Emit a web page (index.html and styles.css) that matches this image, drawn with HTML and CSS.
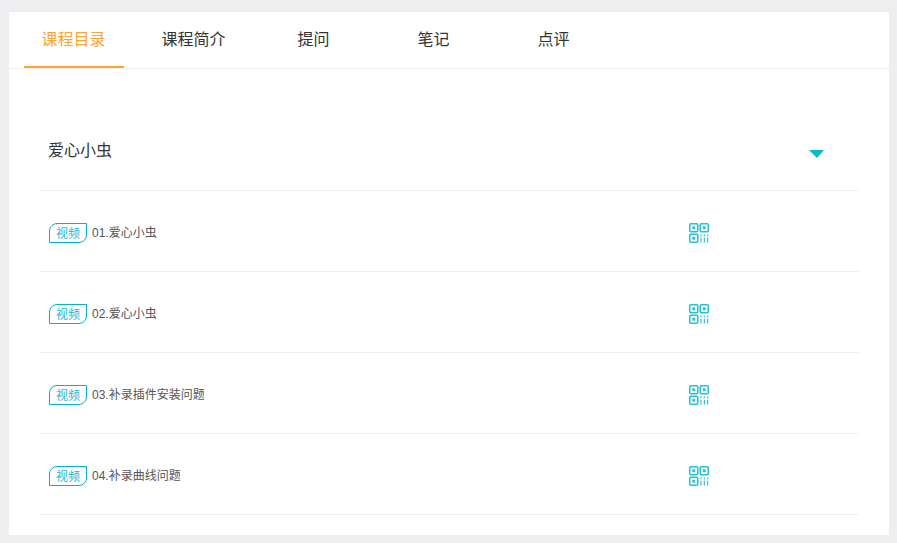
FILE: index.html
```html
<!DOCTYPE html>
<html lang="en">
  <head>
    <title>课程目录</title>
    <meta charset="UTF-8">
    <link rel="stylesheet" href="styles.css">
  </head>
  <body>
    <svg class="defs" width="0" height="0">
      <symbol id="qr" viewBox="0 0 21 21">
        <g fill="none" stroke="#22c3d6" stroke-width="1.6">
          <rect x="0.8" y="0.8" width="8.4" height="8.4" rx="1"/>
          <rect x="11.8" y="0.8" width="8.4" height="8.4" rx="1"/>
          <rect x="0.8" y="11.8" width="8.4" height="8.4" rx="1"/>
        </g>
        <g fill="#22c3d6">
          <rect x="3.5" y="3.5" width="3" height="3"/>
          <rect x="14.5" y="3.5" width="3" height="3"/>
          <rect x="3.5" y="14.5" width="3" height="3"/>
          <rect x="12" y="12" width="1.2" height="2"/>
          <rect x="12" y="15.5" width="1.2" height="5"/>
          <rect x="15.5" y="12" width="1.2" height="2"/>
          <rect x="15.5" y="15.5" width="1.2" height="5"/>
          <rect x="19" y="12" width="1.2" height="2"/>
          <rect x="19" y="15.5" width="1.2" height="5"/>
        </g>
      </symbol>
    </svg>
    <div class="panel">
      <div class="tabs">
        <a class="tab active">课程目录</a>
        <a class="tab">课程简介</a>
        <a class="tab">提问</a>
        <a class="tab">笔记</a>
        <a class="tab">点评</a>
      </div>
      <div class="content">
        <div class="chapter">
          <span class="chapter-name">爱心小虫</span>
          <span class="arrow"></span>
        </div>
        <div class="lesson">
          <span class="tag">视频</span>
          <span class="lesson-name">01.爱心小虫</span>
          <svg class="qr"><use href="#qr"/></svg>
        </div>
        <div class="lesson">
          <span class="tag">视频</span>
          <span class="lesson-name">02.爱心小虫</span>
          <svg class="qr"><use href="#qr"/></svg>
        </div>
        <div class="lesson">
          <span class="tag">视频</span>
          <span class="lesson-name">03.补录插件安装问题</span>
          <svg class="qr"><use href="#qr"/></svg>
        </div>
        <div class="lesson">
          <span class="tag">视频</span>
          <span class="lesson-name">04.补录曲线问题</span>
          <svg class="qr"><use href="#qr"/></svg>
        </div>
      </div>
    </div>
  </body>
</html>
```

FILE: styles.css
```css
*{
    margin: 0;
    padding: 0;
    box-sizing: border-box;
}
html,body{width: 100%;height: 100%;overflow: hidden;}
body{
    background: #eeeef0;
    padding: 12px 8px 8px 9px;
    font-family: "Liberation Sans", "Noto Sans CJK SC", sans-serif;
    color: #333;
}
.defs{
    display: block;
    height: 0;
}
.panel{
    height: 523px;
    background: #fff;
}
.tabs{
    height: 57px;
    padding-left: 15px;
    display: flex;
    gap: 20px;
    border-bottom: 1px solid #eaeeee;
}
.tab{
    width: 100px;
    height: 56px;
    padding-right: 1px;
    line-height: 56px;
    text-align: center;
    font-size: 16px;
}
.tab.active{
    color: #ffa42e;
    border-bottom: 2px solid #ffa42e;
}
.content{
    padding: 0 30px;
}
.chapter{
    height: 122px;
    padding: 70px 35px 0 9px;
    display: flex;
    justify-content: space-between;
    align-items: flex-start;
    border-bottom: 1px solid #efefef;
}
.chapter-name{
    font-size: 16px;
    line-height: 24px;
}
.arrow{
    margin-top: 11px;
    border-top: 8px solid #00bcd0;
    border-left: 8px solid transparent;
    border-right: 7px solid transparent;
}
.lesson{
    height: 81px;
    padding: 32px 0 0 10px;
    display: flex;
    align-items: flex-start;
    border-bottom: 1px solid #efefef;
}
.tag{
    width: 38px;
    height: 20px;
    line-height: 20px;
    text-align: center;
    font-size: 12px;
    color: #22b8cf;
    border: 1px solid #00b4cc;
    border-radius: 8px 0 8px 0;
}
.lesson-name{
    width: 597px;
    margin-left: 5px;
    font-size: 12px;
    line-height: 20px;
    color: #555;
}
.qr{
    width: 20px;
    height: 20px;
}
```
